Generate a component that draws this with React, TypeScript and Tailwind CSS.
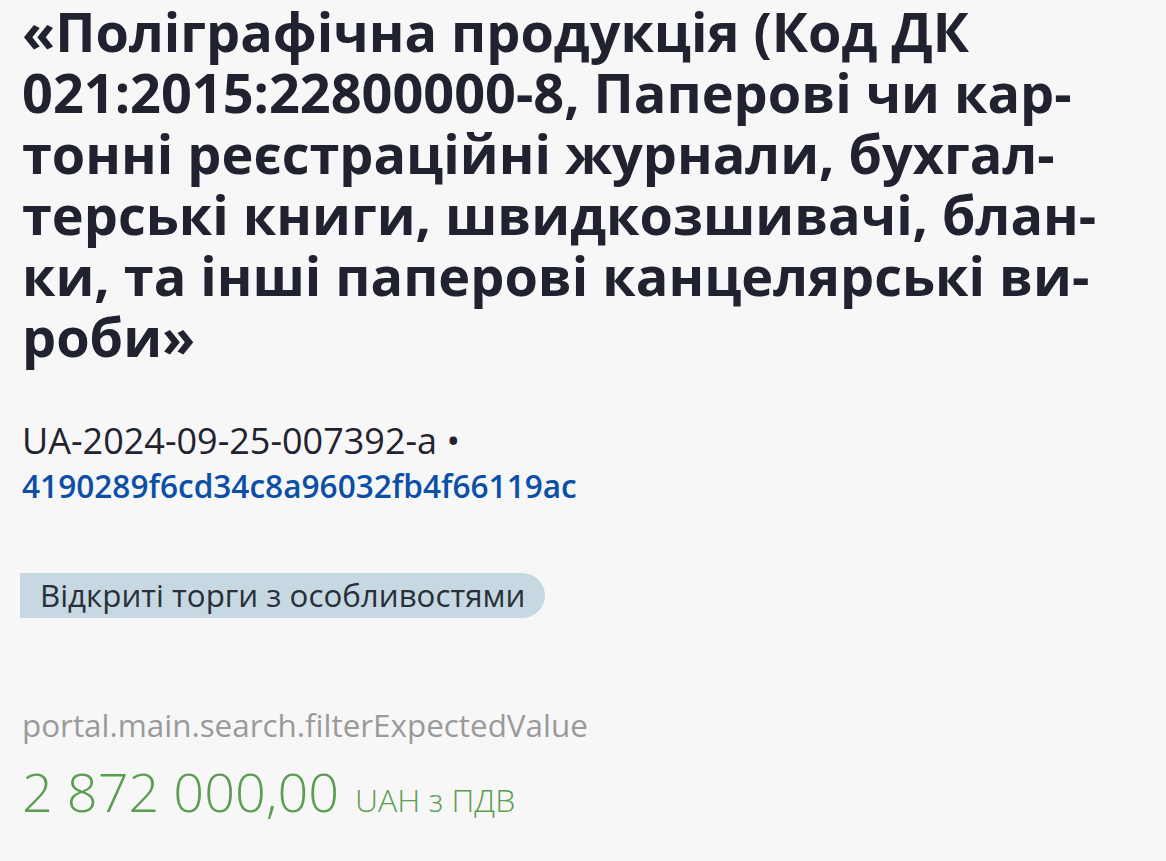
export default function App() {
  const titleLines = [
    '«Поліграфічна продукція (Код ДК',
    '021:2015:22800000-8, Паперові чи кар-',
    'тонні реєстраційні журнали, бухгал-',
    'терські книги, швидкозшивачі, блан-',
    'ки, та інші паперові канцелярські ви-',
    'роби»',
  ]

  return (
    <div className="min-h-[861px] bg-[#f7f7f8] px-[22px] pt-px font-['Open_Sans',sans-serif]">
      <h1 className="text-[54px] font-bold leading-[61px] text-[#21222f]">
        {titleLines.map(line => (
          <span key={line} className="block whitespace-nowrap">{line}</span>
        ))}
      </h1>

      <div className="mt-[51px] leading-[45px]">
        <div className="text-[36px] text-[#22232f]">UA-2024-09-25-007392-a •</div>
        <div className="text-[31.6px] font-semibold text-[#0b4fa6]">4190289f6cd34c8a96032fb4f66119ac</div>
      </div>

      <div className="mt-[65px] flex">
        <span className="-ml-[2px] rounded-l-md rounded-r-full bg-[#c6d9e2] pl-[20px] pr-[20px] text-[31.3px] leading-[45px] text-[#2a2f3a]">
          Відкриті торги з особливостями
        </span>
      </div>

      <div className="mt-[85px] text-[31.4px] leading-[44px] text-[#9a9a9a]">
        portal.main.search.filterExpectedValue
      </div>
      <div className="mt-[12px] flex items-baseline gap-[16px] text-[#5a9e4f]">
        <span className="text-[54px] font-light leading-[64px]">2 872 000,00</span>
        <span className="text-[32px] font-light">UAH з ПДВ</span>
      </div>
    </div>
  )
}
